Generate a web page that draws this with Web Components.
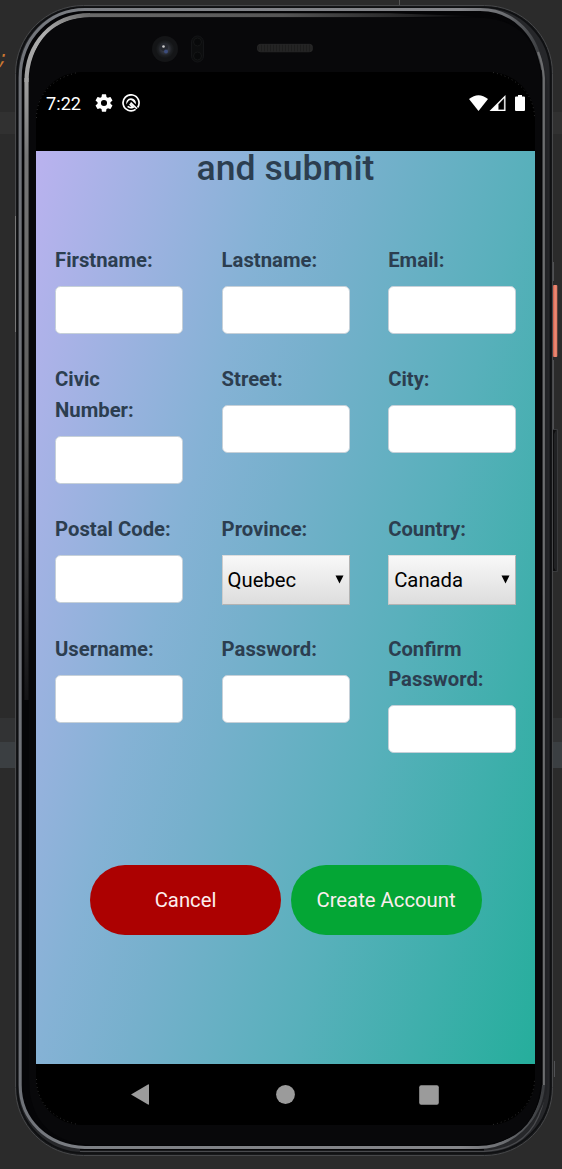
<!DOCTYPE html>
<html lang="en">
<head>
<meta charset="utf-8">
<title>Create account</title>
<style>
html,body{margin:0;height:100%}
body{font-family:Roboto,"Liberation Sans",sans-serif;background:#2b2b2b;overflow:hidden}
</style>
</head>
<body>
<phone-emulator>
  <status-bar>7:22</status-bar>
  <signup-page>
    <form-field label="Firstname:"></form-field>
    <form-field label="Lastname:"></form-field>
    <form-field label="Email:"></form-field>
    <form-field label="Civic Number:"></form-field>
    <form-field label="Street:"></form-field>
    <form-field label="City:"></form-field>
    <form-field label="Postal Code:"></form-field>
    <select-field label="Province:">Quebec</select-field>
    <select-field label="Country:">Canada</select-field>
    <form-field label="Username:"></form-field>
    <form-field label="Password:"></form-field>
    <form-field label="Confirm Password:"></form-field>
    <pill-button slot="actions" style="--fill:#ac0101">Cancel</pill-button>
    <pill-button slot="actions" style="--fill:#04a635">Create Account</pill-button>
  </signup-page>
  <nav-bar></nav-bar>
</phone-emulator>
<script>
const define = (name, html, init) => customElements.define(name, class extends HTMLElement {
  constructor() {
    super();
    const t = document.createElement('template');
    t.innerHTML = html;
    this.attachShadow({mode: 'open'}).append(t.content.cloneNode(true));
  }
  connectedCallback() { if (init) init(this); }
});

define('phone-emulator', `
<style>
:host{display:grid;width:562px;height:1169px;overflow:hidden}
svg,.screen{grid-area:1/1}
.screen{box-sizing:border-box;margin:72px 27px 44px 36px;display:flex;flex-direction:column;min-width:0}
</style>
<svg width="562" height="1169" viewBox="0 0 562 1169" fill="none">
  <defs>
    <linearGradient id="ring" x1="0" y1="0" x2="562" y2="0" gradientUnits="userSpaceOnUse"><stop offset="0" stop-color="#6b6e74"/><stop offset=".15" stop-color="#7d8085"/><stop offset=".82" stop-color="#85868a"/><stop offset=".9" stop-color="#6a6c70"/><stop offset=".96" stop-color="#3c3e41"/><stop offset="1" stop-color="#303134"/></linearGradient>
    <linearGradient id="left" x1="0" y1="60" x2="0" y2="700" gradientUnits="userSpaceOnUse"><stop offset="0" stop-color="#aaa"/><stop offset=".15" stop-color="#777"/><stop offset=".55" stop-color="#5d5d5c"/><stop offset="1" stop-color="#141416"/></linearGradient>
    <linearGradient id="top" x1="90" y1="0" x2="475" y2="0" gradientUnits="userSpaceOnUse"><stop offset="0" stop-color="#6a6a6a"/><stop offset=".5" stop-color="#555"/><stop offset="1" stop-color="#0a0a0c"/></linearGradient>
    <linearGradient id="corner" x1="30" y1="80" x2="90" y2="16" gradientUnits="userSpaceOnUse"><stop offset="0" stop-color="#a0a0a0"/><stop offset=".5" stop-color="#aeaeae"/><stop offset="1" stop-color="#6a6a6a"/></linearGradient>
    <linearGradient id="power" x1="553" y1="0" x2="557" y2="0" gradientUnits="userSpaceOnUse"><stop offset="0" stop-color="#c65a4a"/><stop offset=".5" stop-color="#f08d76"/><stop offset="1" stop-color="#e07762"/></linearGradient>
    <radialGradient id="lens"><stop offset="0" stop-color="#4a4c58"/><stop offset=".5" stop-color="#2d3038"/><stop offset=".75" stop-color="#1d1f22"/><stop offset="1" stop-color="#151719"/></radialGradient>
    <pattern id="mesh" width="3" height="4" patternUnits="userSpaceOnUse"><rect width="3" height="4" fill="#242424"/><path d="M0 0V4" stroke="#151515"/></pattern>
  </defs>
  <rect width="562" height="1169" fill="#2b2b2b"/>
  <path d="M0 112H562V134H0z" fill="#313131"/>
  <path d="M0 718H562V742H0z" fill="#323334"/>
  <path d="M0 742H562V768H0z" fill="#3b3f42"/>
  <path d="M399.5 0V5" stroke="#555"/>
  <text x="-2.5" y="64" font-family="Liberation Mono,monospace" font-style="italic" font-size="18" fill="#cc7832">;</text>
  <path d="M553.5 262V281M553.5 360V429M554.5 1061V1077" stroke="#505154"/>
  <rect x="553" y="285" width="4.3" height="72" rx="1" fill="url(#power)"/>
  <path d="M552 429.5H557.5V571.5H552z" fill="#202123" stroke="#393a3c"/>
  <path d="M552 430H556L554 434V568L556 571H552z" fill="#0e0e0f"/>
  <rect x="15.5" y="5.5" width="537" height="1150" rx="68" fill="#18191b" stroke="#47484a"/>
  <rect x="17.5" y="7.5" width="533" height="1145.5" rx="66" fill="#26272a" stroke="#0f1012" stroke-width="1.6"/>
  <path d="M80 1151.3H484Q540 1149 546 1085" stroke="#4a4b4e" stroke-width="1.3"/>
  <path d="M80 1149.8H484" stroke="#050507" stroke-width="1.4"/>
  <path d="M20.2 1085V78Q22 11 85 9.5H470C515 9.5 545.5 40 547.5 90V1085C545 1122 510 1147.5 478 1147.5H85Q22 1143 20.2 1085z" fill="#222326"/>
  <path d="M543.5 1085C541 1122 510 1147.5 478 1147.5H85C47 1146 20.2 1120 20.2 1085V78C20.2 37 50 9.5 85 9.5H480C515 9.5 539 37 541.5 70" fill="#050507" stroke="url(#ring)" stroke-width="3"/>
  <path d="M90 12.5H470C511 13 540.5 43 542 78V1080Q538 1144 475 1145.5H90Q24 1142 23 1080V80Q27 14 90 12.5z" fill="#050507"/>
  <path d="M15.5 216V332" stroke="#777"/>
  <path d="M26.5 700V78" stroke="url(#left)" stroke-width="4.2"/>
  <path d="M26.5 82C26.5 43 53 15.2 90 15.2" stroke="url(#corner)" stroke-width="4.2"/>
  <path d="M90 13.2H390L475 16.2L390 17.3H90z" fill="url(#top)"/>
  <path d="M543.8 1085V78Q543 64 538 52" stroke="#6c6d6f" stroke-width="2.2"/>
  <path d="M90 17.5H475Q538 18 541 80V1080Q538 1143 475 1145H90Q30 1140 29 1080V80Q34 19 90 17.5z" fill="#08080a"/>
  <rect x="36" y="72" width="499" height="1053" rx="46" fill="#000"/>
  <path d="M36.5 118C36.5 95 52 78 78 72.5M493 72.5C518 78 534.5 95 534.5 118M36.5 1079C36.5 1102 52 1119 78 1124.5M493 1124.5C518 1119 534.5 1102 534.5 1079" stroke="#444" stroke-width=".6" stroke-dasharray="1 3"/>
  <circle cx="165" cy="49" r="13" fill="#141517"/><circle cx="165" cy="49" r="9" fill="url(#lens)"/>
  <circle cx="164" cy="47" r="4" fill="#25282f"/><circle cx="166" cy="51.5" r="2" fill="#3c4c7c"/><circle cx="163.5" cy="46.5" r="1.3" fill="#ccc"/>
  <rect x="191.5" y="36" width="12" height="26" rx="6" fill="#0c0d0e" stroke="#141517"/>
  <circle cx="197.5" cy="42" r="4" fill="#08090a" stroke="#151617"/><circle cx="197.5" cy="56" r="4" fill="#08090a" stroke="#151617"/>
  <rect x="257.5" y="44.3" width="55" height="7.5" rx="3" fill="url(#mesh)" stroke="#2d2d2d" stroke-width=".7"/>
</svg>
<div class="screen"><slot></slot></div>`);

define('status-bar', `
<style>
:host{display:flex;align-items:center;box-sizing:border-box;height:79px;padding:0 10px 17px;color:#fff;font-size:18.2px;flex:none}
span{width:35px}
.gear{margin-left:13.5px}.agent{margin-left:9.5px}.wifi{margin-left:auto}.batt{margin-left:9px}
svg{display:block;flex:none}
</style>
<span><slot></slot></span>
<svg class="gear" width="18" height="18" viewBox="2 2 20 20"><path fill="#fff" fill-rule="evenodd" d="M19.14 12.94c.04-.3.06-.61.06-.94s-.02-.64-.07-.94l2.03-1.58a.49.49 0 0 0 .12-.61l-1.92-3.32a.49.49 0 0 0-.59-.22l-2.39.96c-.5-.38-1.03-.7-1.62-.94l-.36-2.54a.48.48 0 0 0-.48-.41h-3.84a.47.47 0 0 0-.47.41l-.36 2.54c-.59.24-1.13.57-1.62.94l-2.39-.96a.47.47 0 0 0-.59.22L2.74 8.87a.47.47 0 0 0 .12.61l2.03 1.58c-.05.3-.09.63-.09.94s.02.64.07.94l-2.03 1.58a.49.49 0 0 0-.12.61l1.92 3.32c.12.22.37.29.59.22l2.39-.96c.5.38 1.03.7 1.62.94l.36 2.54c.05.24.24.41.48.41h3.84c.24 0 .44-.17.47-.41l.36-2.54a6.4 6.4 0 0 0 1.62-.94l2.39.96c.22.08.47 0 .59-.22l1.92-3.32a.47.47 0 0 0-.12-.61zM12 15.4a3.4 3.4 0 1 1 0-6.8 3.4 3.4 0 0 1 0 6.8z"/></svg>
<svg class="agent" width="18" height="18" viewBox="0 0 18 18" fill="none"><path d="M13.6 15.4A8 8 0 1 1 15.6 13.4" stroke="#fff" stroke-width="1.7"/><path d="M4.4 10.6A4.9 4.9 0 1 1 13.8 10.2L10 6.6Q7.6 5 5.6 8.2z" fill="#fff"/><path d="M8.6 8.6L15 14.8M5.6 12.4Q8 14.4 11 13.2L7.6 10.2" stroke="#fff" stroke-width="1.6"/></svg>
<svg class="wifi" width="19" height="16" viewBox="0 0 19 16"><path d="M0 4Q9.5-3.7 19 4L9.5 16z" fill="#fff"/></svg>
<svg width="18" height="16" viewBox="0 0 18 16"><path fill="#fff" fill-rule="evenodd" d="M1.5 16L17.5 0V16zM10.3 9.3V14.8H16.2V3z"/><path d="M10.3 9.3L16.2 3V14.8H10.3z" stroke="#fff" stroke-opacity=".5" stroke-width=".6" fill="none"/></svg>
<svg class="batt" width="10" height="16" viewBox="0 0 10 16"><path d="M3 0H7V1.5H9Q10 1.5 10 2.5V15Q10 16 9 16H1Q0 16 0 15V2.5Q0 1.5 1 1.5H3z" fill="#fff"/></svg>`);

define('signup-page', `
<style>
:host{display:flex;flex-direction:column;height:913px;flex:none;overflow:hidden;color:#2c3e50;
background:linear-gradient(105deg,#bab2ef 0%,#85b2d5 33%,#76b0cc 45%,#58b0bb 67%,#25ae9c 100%)}
h1{margin:-4px 0 0;font-weight:500;font-size:35.6px;line-height:43px;text-align:center;flex:none}
.fields{display:grid;grid-template-columns:repeat(3,128.2px);column-gap:38.4px;row-gap:30.5px;padding:0 19px;margin-top:54.8px;align-items:start}
.actions{display:flex;justify-content:center;gap:9.5px;margin-top:111.8px;padding-left:.6px}
</style>
<h1>and submit</h1>
<div class="fields"><slot></slot></div>
<div class="actions"><slot name="actions"></slot></div>`);

const labelCss = `:host{display:flex;flex-direction:column;min-width:0}
label{font-weight:700;font-size:20.3px;line-height:30.5px;margin-bottom:10.5px}`;

define('form-field', `
<style>${labelCss}
input{display:block;box-sizing:border-box;width:100%;height:48px;margin:0;border:1.3px solid #c6d0d8;border-radius:5.5px;background:#fff;outline:0}
</style><label for="f"></label><input id="f">`,
  el => { el.shadowRoot.querySelector('label').textContent = el.getAttribute('label'); });

define('select-field', `
<style>${labelCss}
:host{margin-bottom:-2px}
.box{display:flex;align-items:center;justify-content:space-between;box-sizing:border-box;height:50px;padding:0 5px 1px;border:1px solid #b3b3b3;border-top-color:#ddd;border-left-color:#ccc;background:linear-gradient(#f8f8f8,#ddd);color:#000;font-size:20.3px}
</style><label></label><div class="box" role="combobox"><slot></slot><svg width="9" height="9" viewBox="0 0 9 9"><path d="M.5 .5H8.5L4.5 8.5z" fill="#000"/></svg></div>`,
  el => { el.shadowRoot.querySelector('label').textContent = el.getAttribute('label'); });

define('pill-button', `
<style>
:host{display:block}
button{display:block;width:191px;height:70px;padding:0 0 1px;border:0;border-radius:35px;background:var(--fill);color:#fceeee;font:400 20.3px Roboto,"Liberation Sans",sans-serif}
</style><button><slot></slot></button>`);

define('nav-bar', `
<style>
:host{display:flex;align-items:center;height:61px;padding:0 96px 0 95px;justify-content:space-between;flex:none}
svg{display:block}
.home{margin-left:2px}
</style>
<svg width="18" height="21" viewBox="0 0 18 21"><path d="M0 10.5L17 .5Q18 0 18 1V20Q18 21 17 20.5z" fill="#9b9b9b"/></svg>
<svg class="home" width="19" height="19" viewBox="0 0 19 19"><circle cx="9.5" cy="9.5" r="9.4" fill="#9b9b9b"/></svg>
<svg width="20" height="20" viewBox="0 0 20 20"><rect x=".2" y=".2" width="19.6" height="19.6" rx="2" fill="#9b9b9b"/></svg>`);
</script>
</body>
</html>
